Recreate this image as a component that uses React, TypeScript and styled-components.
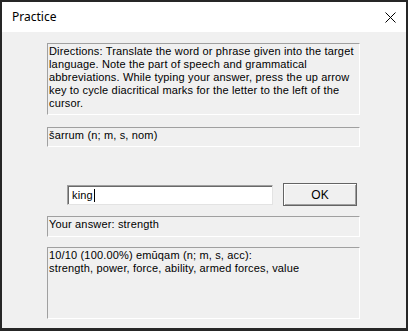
import React from 'react'
import styled, { createGlobalStyle } from 'styled-components'

const GlobalStyle = createGlobalStyle`
  html, body {
    margin: 0;
    padding: 0;
    background: #ffffff;
  }
  * {
    box-sizing: border-box;
  }
`

const Window = styled.div`
  width: 408px;
  height: 331px;
  border: 2px solid #262626;
  border-bottom-width: 3px;
  display: flex;
  flex-direction: column;
  background: #f0f0f0;
  font-family: 'Liberation Sans', Arial, sans-serif;
  font-size: 11px;
  letter-spacing: 0.16px;
  color: #000;
`

const TitleBar = styled.div`
  height: 30px;
  background: #ffffff;
  display: flex;
  align-items: center;
  justify-content: space-between;
  padding-left: 10px;
  padding-right: 10px;
  flex-shrink: 0;
`

const Title = styled.span`
  font-family: 'Noto Sans', 'Open Sans', sans-serif;
  font-size: 12px;
  letter-spacing: 0;
  color: #000;
  margin-top: -1px;
`

const CloseButton = styled.div`
  width: 12px;
  height: 12px;
  display: flex;
  align-items: center;
  justify-content: center;
`

const Client = styled.div`
  flex: 1;
  display: flex;
  flex-direction: column;
  padding: 11px 0 0 45px;
`

const Panel = styled.div<{ $height: number; $gap: number }>`
  width: 313px;
  height: ${(p) => p.$height}px;
  margin-bottom: ${(p) => p.$gap}px;
  border-top: 1px solid #a0a0a0;
  border-left: 1px solid #a0a0a0;
  border-right: 1px solid #ffffff;
  border-bottom: 1px solid #ffffff;
  padding: 1px 0 0 1px;
  line-height: 13px;
  white-space: nowrap;
`

const AnswerRow = styled.div`
  display: flex;
  align-items: center;
  margin-left: 20px;
  margin-top: 36px;
  margin-bottom: 10px;
  height: 23px;
`

const AnswerInput = styled.div`
  width: 206px;
  height: 20px;
  background: #ffffff;
  border-top: 1px solid #a0a0a0;
  border-left: 1px solid #a0a0a0;
  border-right: 1px solid #e3e3e3;
  border-bottom: 1px solid #e3e3e3;
  box-shadow: inset 1px 1px 0 #696969;
  padding: 3px 0 0 4px;
  display: flex;
  align-items: flex-start;
  line-height: 13px;
`

const Caret = styled.span`
  display: inline-block;
  width: 1px;
  height: 13px;
  background: #000;
  margin-left: 1px;
`

const OkButton = styled.div`
  width: 74px;
  height: 23px;
  margin-left: 10px;
  background: #f0f0f0;
  border: 1px solid #646464;
  box-shadow: inset 1px 1px 0 #ffffff, inset -1px -1px 0 #a0a0a0;
  display: flex;
  align-items: center;
  justify-content: center;
  font-size: 12px;
`

export default function App() {
  return (
    <>
      <GlobalStyle />
      <Window>
        <TitleBar>
          <Title>Practice</Title>
          <CloseButton>
            <svg width="11" height="11" viewBox="0 0 11 11">
              <path d="M0.5 0.5 L10.5 10.5 M10.5 0.5 L0.5 10.5" stroke="#000" strokeWidth="1" />
            </svg>
          </CloseButton>
        </TitleBar>
        <Client>
          <Panel $height={72} $gap={12}>
            Directions: Translate the word or phrase given into the target
            <br />
            language. Note the part of speech and grammatical
            <br />
            abbreviations. While typing your answer, press the up arrow
            <br />
            key to cycle diacritical marks for the letter to the left of the
            <br />
            cursor.
          </Panel>
          <Panel $height={20} $gap={0}>
            šarrum (n; m, s, nom)
          </Panel>
          <AnswerRow>
            <AnswerInput>
              king
              <Caret />
            </AnswerInput>
            <OkButton>OK</OkButton>
          </AnswerRow>
          <Panel $height={21} $gap={10}>
            Your answer: strength
          </Panel>
          <Panel $height={72} $gap={0}>
            10/10 (100.00%) emūqam (n; m, s, acc):
            <br />
            strength, power, force, ability, armed forces, value
          </Panel>
        </Client>
      </Window>
    </>
  )
}
